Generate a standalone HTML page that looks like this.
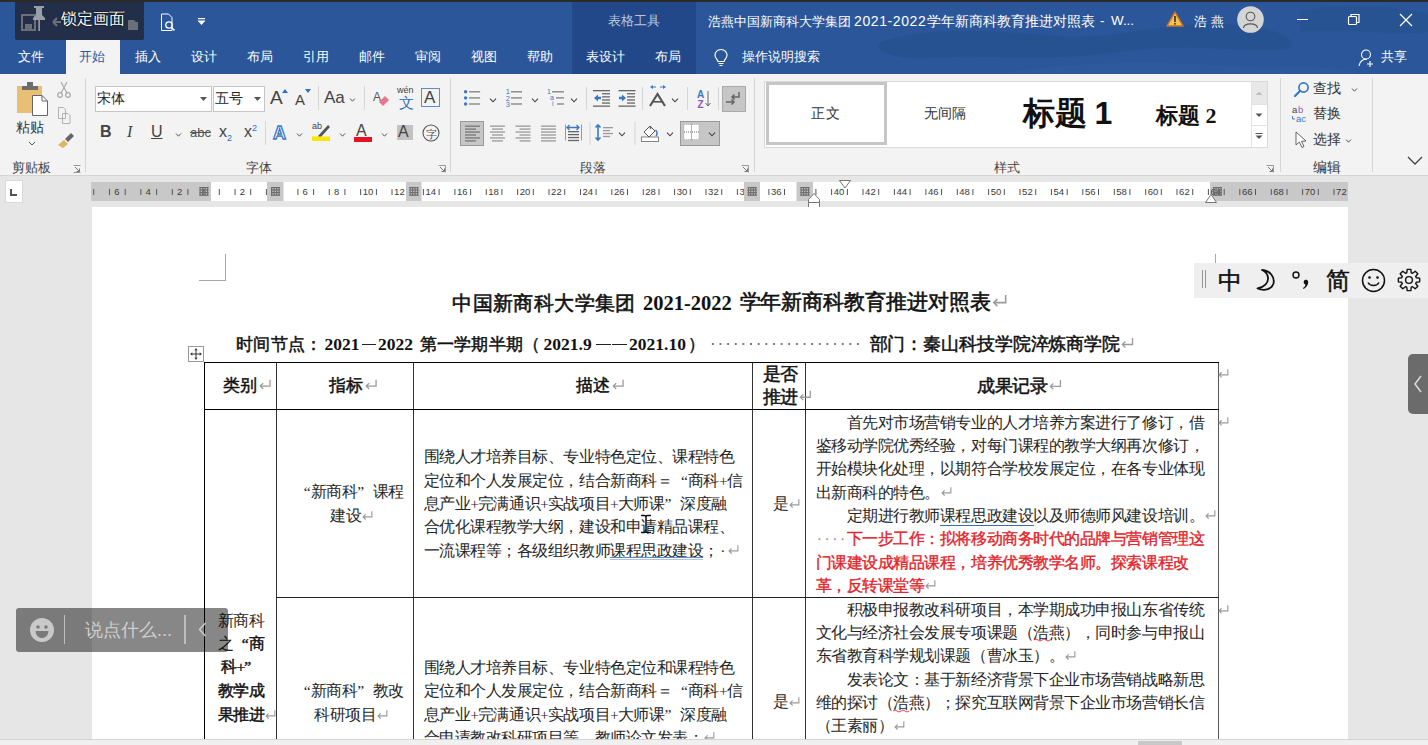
<!DOCTYPE html>
<html><head><meta charset="utf-8">
<style>
*{margin:0;padding:0;box-sizing:border-box}
html,body{width:1428px;height:745px;overflow:hidden;background:#e6e6e6;font-family:"Liberation Sans",sans-serif;position:relative}
.a{position:absolute}
.nw{white-space:nowrap}
#top{left:0;top:0;width:1428px;height:2px;background:#2b2b2b}
#title{left:0;top:2px;width:1428px;height:72px;background:#2b579a;overflow:hidden}
#ribbon{left:0;top:74px;width:1428px;height:102px;background:#f3f3f3;border-bottom:1px solid #d5d5d5}
#ruler{left:91px;top:181px;width:1257px;height:20px;background:#fff}
#page{left:91px;top:207px;width:1257px;height:532px;background:#fff}
#status{left:0;top:738px;width:1428px;height:7px;background:#f0f0f0;border-top:1px solid #d0d0d0}
.tab{top:38px;height:36px;line-height:36px;color:#fff;font-size:15px;text-align:center}
.doc{font-family:"Liberation Serif",serif;color:#1a1a1a}
.ln{position:absolute;background:#000}
.L{position:absolute;white-space:nowrap;font-family:"Liberation Serif",serif;line-height:1.5}
.L i{display:inline-block;width:1em;text-align:center;font-style:normal}
.L i.r{text-align:right}.L i.l{text-align:left}
</style></head>
<body>
<div id="top" class="a"></div>
<div id="title" class="a">
 <svg class="a" style="left:0;top:0" width="1428" height="72">
  <path d="M880 40 C930 22 1010 30 1060 34 C1120 38 1160 20 1230 22 C1270 24 1300 36 1290 46 C1250 52 1180 40 1120 50 C1060 60 990 52 930 56 C900 58 870 50 880 40 Z" fill="#244b86" opacity="0.4"/>
  <path d="M1300 10 C1340 0 1400 5 1428 12 V30 C1390 34 1340 26 1300 30 Z" fill="#26508c" opacity="0.5"/>
  <path d="M1000 72 C1060 60 1150 58 1230 64 C1280 68 1320 60 1360 72 Z" fill="#2f5da0" opacity="0.5"/>
 </svg>
 <div class="a" style="left:572px;top:0;width:124px;height:72px;background:#22488a"></div>
 <div class="a nw" style="left:572px;top:10px;width:124px;text-align:center;font-size:13.4px;color:#b9c6dc">表格工具</div>
 <div class="a nw" style="left:708px;top:11px;font-size:13.3px;color:#fff">浩燕中国新商科大学集团</div>
 <div class="a nw" style="left:854px;top:11px;font-size:14px;color:#fff;letter-spacing:0.6px">2021-2022</div>
 <div class="a nw" style="left:927px;top:11px;font-size:13.5px;color:#fff">学年新商科教育推进对照表</div>
 <div class="a nw" style="left:1100px;top:11px;font-size:13.4px;color:#fff">-</div>
 <div class="a nw" style="left:1111px;top:11px;font-size:13.4px;color:#fff">W...</div>
 <svg class="a" style="left:1166px;top:8px" width="18" height="18"><path d="M9 2 L17 16 L1 16 Z" fill="#f4c24a" stroke="#c6722a" stroke-width="1.5" stroke-linejoin="round"/><rect x="8.2" y="6" width="1.6" height="6" fill="#333"/><rect x="8.2" y="13" width="1.6" height="1.6" fill="#333"/></svg>
 <div class="a nw" style="left:1194px;top:11px;font-size:13.4px;color:#fff">浩</div><div class="a nw" style="left:1211px;top:11px;font-size:13.4px;color:#fff">燕</div>
 <svg class="a" style="left:1237px;top:4px" width="27" height="27"><circle cx="13.5" cy="13.5" r="13.3" fill="#d4d4d4"/><circle cx="13.5" cy="10.5" r="4.3" fill="none" stroke="#555" stroke-width="1.1"/><path d="M6.5 22 C7 16.5 20 16.5 20.5 22" fill="none" stroke="#555" stroke-width="1.1"/></svg>
 <div class="a" style="left:1297px;top:17px;width:11px;height:1px;background:#fff"></div>
 <svg class="a" style="left:1347px;top:11px" width="14" height="14"><rect x="1.5" y="3.5" width="8" height="8" fill="none" stroke="#fff" stroke-width="1.2" rx="1"/><path d="M4 3.5 V1.5 H12 V9.5 H9.5" fill="none" stroke="#fff" stroke-width="1.2"/></svg>
 <svg class="a" style="left:1399px;top:11px" width="14" height="14"><path d="M1 1 L13 13 M13 1 L1 13" stroke="#fff" stroke-width="1.3"/></svg>
 <!-- tabs -->
 <div class="a" style="left:66px;top:38px;width:54px;height:34px;background:#f3f3f3"></div>
 <div class="a nw" style="left:18px;top:46px;font-size:13.4px;color:#fff">文件</div>
 <div class="a nw" style="left:79px;top:46px;font-size:13.4px;color:#2b579a">开始</div>
 <div class="a nw" style="left:135px;top:46px;font-size:13.4px;color:#fff">插入</div>
 <div class="a nw" style="left:191px;top:46px;font-size:13.4px;color:#fff">设计</div>
 <div class="a nw" style="left:247px;top:46px;font-size:13.4px;color:#fff">布局</div>
 <div class="a nw" style="left:303px;top:46px;font-size:13.4px;color:#fff">引用</div>
 <div class="a nw" style="left:359px;top:46px;font-size:13.4px;color:#fff">邮件</div>
 <div class="a nw" style="left:415px;top:46px;font-size:13.4px;color:#fff">审阅</div>
 <div class="a nw" style="left:471px;top:46px;font-size:13.4px;color:#fff">视图</div>
 <div class="a nw" style="left:527px;top:46px;font-size:13.4px;color:#fff">帮助</div>
 <div class="a nw" style="left:586px;top:46px;font-size:13.4px;color:#fff">表设计</div>
 <div class="a nw" style="left:655px;top:46px;font-size:13.4px;color:#fff">布局</div>
 <svg class="a" style="left:713px;top:46px" width="16" height="20"><path d="M8 1.5 C4 1.5 2 4.5 2 7.2 C2 10 4.5 11.5 5 13.5 L11 13.5 C11.5 11.5 14 10 14 7.2 C14 4.5 12 1.5 8 1.5 Z" fill="none" stroke="#fff" stroke-width="1.2"/><path d="M5.5 15.5 H10.5 M6.5 17.5 H9.5" stroke="#fff" stroke-width="1.2"/></svg>
 <div class="a nw" style="left:742px;top:46px;font-size:13.4px;color:#fff">操作说明搜索</div>
 <svg class="a" style="left:1358px;top:46px" width="18" height="20"><circle cx="8" cy="6.5" r="4.5" fill="none" stroke="#fff" stroke-width="1.1"/><path d="M1 18 C1.5 12.5 6 11 9 11.3" fill="none" stroke="#fff" stroke-width="1.1"/><path d="M12 13 V19 M9 16 H15" stroke="#fff" stroke-width="1.1"/></svg>
 <div class="a nw" style="left:1381px;top:46px;font-size:13.4px;color:#fff">共享</div>
 <!-- lock overlay -->
 <div class="a" style="left:15px;top:-2px;width:129px;height:40px;background:#232f48;border-radius:0 0 2px 2px"></div>
 <svg class="a" style="left:20px;top:8px" width="120" height="26">
  <rect x="2" y="5" width="13" height="15" fill="none" stroke="#6b6f78" stroke-width="2"/>
  <rect x="5" y="14" width="7" height="6" fill="#6b6f78"/>
  <path d="M33 12 H41 M33 12 L37 8 M33 12 L37 16" stroke="#6b6f78" stroke-width="2" fill="none"/>
  <path d="M108 10 H114 L116 12 H118 V20 H108 Z" fill="#6b6f78"/>
 </svg>
 <svg class="a" style="left:30px;top:2px" width="18" height="28"><path d="M4 2 H14 V4 H12 V11 L15 14 V16 H3 V14 L6 11 V4 H4 Z" fill="#9a9ea6"/><rect x="8.3" y="16" width="1.6" height="11" fill="#9a9ea6"/></svg>
 <div class="a nw" style="left:61px;top:7px;font-size:16px;color:#fff;text-shadow:0 0 1.5px #000,0 0 1px #000">锁定画面</div>
 <svg class="a" style="left:160px;top:11px" width="20" height="20"><path d="M1.5 1 H8.5 L12 4.5 V17.5 H1.5 Z" fill="none" stroke="#fff" stroke-width="1"/><circle cx="9" cy="12" r="3.2" fill="none" stroke="#fff" stroke-width="1.3"/><path d="M11.3 14.3 L14.5 17.5" stroke="#fff" stroke-width="1.5"/></svg>
 <svg class="a" style="left:197px;top:16px" width="9" height="8"><rect x="1" y="0" width="7" height="1.2" fill="#fff"/><path d="M0.5 2.5 H8.5 L4.5 7 Z" fill="#fff"/></svg>
</div>
<div id="ribbon" class="a">
 <!-- separators -->
 <div class="a" style="left:85px;top:4px;width:1px;height:94px;background:#d6d6d6"></div>
 <div class="a" style="left:450px;top:4px;width:1px;height:94px;background:#d6d6d6"></div>
 <div class="a" style="left:754px;top:4px;width:1px;height:94px;background:#d6d6d6"></div>
 <div class="a" style="left:1280px;top:4px;width:1px;height:94px;background:#d6d6d6"></div>
 <div class="a" style="left:1372px;top:4px;width:1px;height:94px;background:#d6d6d6"></div>
 <!-- clipboard -->
 <svg class="a" style="left:14px;top:6px" width="64" height="72">
  <rect x="3" y="6" width="25" height="27" fill="#e8bf73"/>
  <path d="M8 6 H24 V10 H8 Z" fill="#6d6d6d"/><rect x="13" y="2" width="6" height="5" fill="#6d6d6d"/>
  <path d="M18.5 15.5 H28 L33.5 21 V35.5 H18.5 Z" fill="#fff" stroke="#666" stroke-width="1"/>
  <path d="M28 15.5 V21 H33.5" fill="none" stroke="#666" stroke-width="1"/>
  <circle cx="46" cy="15" r="2.3" fill="none" stroke="#aaa" stroke-width="1.2"/><circle cx="54" cy="15" r="2.3" fill="none" stroke="#aaa" stroke-width="1.2"/>
  <path d="M47 13 L53 2 M53 13 L47 2" stroke="#aaa" stroke-width="1.2"/>
  <path d="M44.5 27.5 H49.5 L51.5 29.5 V38.5 H44.5 Z M48.5 33.5 H54 L56 35.5 V43.5 H48.5 Z" fill="#f3f3f3" stroke="#aaa" stroke-width="0.9"/>
  <path d="M44 65 L50 60 L54 64 L49 68 Z" fill="#e0b468"/><path d="M51 59 L57 53 L60 56 L54 62 Z" fill="#666"/>
 </svg>
 <div class="a nw" style="left:16px;top:45px;font-size:14px;color:#333">粘贴</div>
 <svg class="a" style="left:28px;top:67px" width="8" height="5"><path d="M1 1 L4 4 L7 1" fill="none" stroke="#555" stroke-width="1"/></svg>
 <div class="a nw" style="left:12px;top:85px;font-size:13px;color:#444">剪贴板</div>
 <svg class="a" style="left:73px;top:91px" width="8" height="8"><path d="M0.5 0.5 H7.5 V7.5 H0.5 Z" fill="none" stroke="#999" stroke-width="1" stroke-dasharray="7 7"/><path d="M2 2 L6.5 6.5 M6.5 3.5 V6.5 H3.5" fill="none" stroke="#777" stroke-width="1"/></svg>
 <!-- font group -->
 <div class="a" style="left:95px;top:12px;width:117px;height:26px;background:#fff;border:1px solid #c6c6c6"></div>
 <div class="a nw" style="left:97px;top:16px;font-size:14px;color:#222">宋体</div>
 <svg class="a" style="left:200px;top:23px" width="7" height="4"><path d="M0 0 H7 L3.5 4Z" fill="#555"/></svg>
 <div class="a" style="left:213px;top:12px;width:52px;height:26px;background:#fff;border:1px solid #c6c6c6"></div>
 <div class="a nw" style="left:215px;top:16px;font-size:14px;color:#222">五号</div>
 <svg class="a" style="left:254px;top:23px" width="7" height="4"><path d="M0 0 H7 L3.5 4Z" fill="#555"/></svg>
 <div class="a nw" style="left:270px;top:13px;font-size:19px;color:#444">A</div>
 <svg class="a" style="left:282px;top:15px" width="6" height="4"><path d="M0 4 L3 0 L6 4Z" fill="#2f6fbf"/></svg>
 <div class="a nw" style="left:295px;top:17px;font-size:15px;color:#444">A</div>
 <svg class="a" style="left:305px;top:15px" width="6" height="4"><path d="M0 0 L3 4 L6 0Z" fill="#2f6fbf"/></svg>
 <div class="a" style="left:318px;top:12px;width:1px;height:24px;background:#d6d6d6"></div>
 <div class="a nw" style="left:324px;top:14px;font-size:17px;color:#444">Aa</div>
 <svg class="a" style="left:349px;top:24px" width="7" height="4"><path d="M1 0.5 L3.5 3.2 L6 0.5" fill="none" stroke="#555"/></svg>
 <div class="a" style="left:364px;top:12px;width:1px;height:24px;background:#d6d6d6"></div>
 <svg class="a" style="left:372px;top:14px" width="20" height="20"><text x="1" y="13" font-size="12" fill="#555" font-family="Liberation Sans">A</text><path d="M7 14 L13 8 L17 12 L11 18 Z" fill="#e8778a"/></svg>
 <svg class="a" style="left:396px;top:10px" width="20" height="26"><text x="1" y="9" font-size="9" fill="#444" font-family="Liberation Sans">wén</text><text x="3" y="24" font-size="15" fill="#2f6fbf">文</text></svg>
 <div class="a" style="left:421px;top:14px;width:19px;height:19px;border:1px solid #5b8fd0"></div>
 <div class="a nw" style="left:424px;top:14px;font-size:17px;color:#444">A</div>
 <!-- font row 2 -->
 <div class="a nw" style="left:100px;top:49px;font-size:16px;font-weight:bold;color:#444">B</div>
 <div class="a nw" style="left:127px;top:49px;font-size:16px;font-style:italic;color:#444;font-family:'Liberation Serif'">I</div>
 <div class="a nw" style="left:151px;top:49px;font-size:16px;color:#444;text-decoration:underline">U</div>
 <svg class="a" style="left:175px;top:59px" width="7" height="4"><path d="M1 0.5 L3.5 3.2 L6 0.5" fill="none" stroke="#555"/></svg>
 <div class="a nw" style="left:190px;top:51px;font-size:13px;color:#555;text-decoration:line-through">abc</div>
 <div class="a nw" style="left:219px;top:49px;font-size:16px;color:#444">x<sub style="font-size:9px;color:#2f6fbf">2</sub></div>
 <div class="a nw" style="left:244px;top:49px;font-size:16px;color:#444">x<sup style="font-size:9px;color:#2f6fbf">2</sup></div>
 <div class="a" style="left:265px;top:47px;width:1px;height:24px;background:#d6d6d6"></div>
 <svg class="a" style="left:272px;top:48px" width="18" height="22"><text x="1" y="17" font-size="18" fill="#fff" stroke="#3a78c0" stroke-width="1.3" font-family="Liberation Sans" font-weight="bold">A</text></svg>
 <svg class="a" style="left:296px;top:59px" width="7" height="4"><path d="M1 0.5 L3.5 3.2 L6 0.5" fill="none" stroke="#555"/></svg>
 <svg class="a" style="left:311px;top:45px" width="22" height="26"><text x="1" y="10" font-size="9" fill="#444" font-family="Liberation Sans">ab</text><path d="M7 17 L17 6 L19 8 L9 19 Z" fill="#555"/><rect x="1" y="17.5" width="18" height="4.5" fill="#f8e800"/></svg>
 <svg class="a" style="left:339px;top:59px" width="7" height="4"><path d="M1 0.5 L3.5 3.2 L6 0.5" fill="none" stroke="#555"/></svg>
 <div class="a nw" style="left:356px;top:48px;font-size:16px;color:#444">A</div>
 <div class="a" style="left:354px;top:63px;width:18px;height:4.5px;background:#e81123"></div>
 <svg class="a" style="left:381px;top:59px" width="7" height="4"><path d="M1 0.5 L3.5 3.2 L6 0.5" fill="none" stroke="#555"/></svg>
 <div class="a" style="left:397px;top:51px;width:15.5px;height:15px;background:#c2c2c2"></div>
 <div class="a nw" style="left:398px;top:49px;font-size:16px;color:#444">A</div>
 <svg class="a" style="left:421px;top:49px" width="20" height="20"><circle cx="10" cy="10" r="8" fill="none" stroke="#555" stroke-width="1.1"/><text x="4.5" y="14.5" font-size="11" fill="#555">字</text></svg>
<svg class="a" style="left:450px;top:0" width="305" height="100"><circle cx="15.600000000000023" cy="17.799999999999997" r="1.7" fill="#3a78c0"/><rect x="19.100000000000023" y="17.099999999999998" width="11" height="1.4" fill="#888"/><circle cx="15.600000000000023" cy="23.900000000000006" r="1.7" fill="#3a78c0"/><rect x="19.100000000000023" y="23.200000000000006" width="11" height="1.4" fill="#888"/><circle cx="15.600000000000023" cy="30" r="1.7" fill="#3a78c0"/><rect x="19.100000000000023" y="29.3" width="11" height="1.4" fill="#888"/><text x="55.80000000000001" y="20.4" font-size="7.5" fill="#3a78c0" font-family="Liberation Sans">1</text><rect x="61" y="17.099999999999998" width="11" height="1.4" fill="#888"/><text x="55.80000000000001" y="26.500000000000007" font-size="7.5" fill="#3a78c0" font-family="Liberation Sans">2</text><rect x="61" y="23.200000000000006" width="11" height="1.4" fill="#888"/><text x="55.80000000000001" y="32.6" font-size="7.5" fill="#3a78c0" font-family="Liberation Sans">3</text><rect x="61" y="29.3" width="11" height="1.4" fill="#888"/><text x="97" y="20" font-size="7" fill="#3a78c0" font-family="Liberation Sans">1</text><text x="100" y="26" font-size="7" fill="#3a78c0" font-family="Liberation Sans">a</text><text x="102" y="32" font-size="7" fill="#3a78c0" font-family="Liberation Sans">i</text><rect x="102" y="17.099999999999994" width="12" height="1.4" fill="#888"/><rect x="106" y="23.200000000000003" width="8" height="1.4" fill="#888"/><rect x="107" y="29.299999999999997" width="7" height="1.4" fill="#888"/><rect x="136" y="13" width="1" height="23" fill="#d6d6d6"/><rect x="143" y="16.0" width="17" height="1.3" fill="#666"/><rect x="168.5" y="16.0" width="17" height="1.3" fill="#666"/><rect x="152" y="19.099999999999994" width="8" height="1.3" fill="#666"/><rect x="177" y="19.099999999999994" width="8" height="1.3" fill="#666"/><rect x="152" y="22.200000000000003" width="8" height="1.3" fill="#666"/><rect x="177" y="22.200000000000003" width="8" height="1.3" fill="#666"/><rect x="152" y="25.299999999999997" width="8" height="1.3" fill="#666"/><rect x="177" y="25.299999999999997" width="8" height="1.3" fill="#666"/><rect x="152" y="28.400000000000006" width="8" height="1.3" fill="#666"/><rect x="177" y="28.400000000000006" width="8" height="1.3" fill="#666"/><rect x="143" y="31.5" width="17" height="1.3" fill="#666"/><rect x="168.5" y="31.5" width="17" height="1.3" fill="#666"/><path d="M144 24 L148 20.5 V22.799999999999997 H151 V25.200000000000003 H148 V27.5 Z" fill="#3a78c0"/><path d="M176 24 L172 20.5 V22.799999999999997 H169 V25.200000000000003 H172 V27.5 Z" fill="#3a78c0"/><rect x="192" y="13" width="1" height="23" fill="#d6d6d6"/><path d="M200 32 L207.5 20 L215 32" fill="none" stroke="#555" stroke-width="2.2"/><rect x="203" y="27" width="9" height="1.6" fill="#555"/><path d="M200 13 L203 11 V15 Z M216 13 L213 11 V15 Z" fill="#3a78c0"/><rect x="202" y="12.5" width="4" height="1" fill="#3a78c0"/><rect x="210" y="12.5" width="4" height="1" fill="#3a78c0"/><rect x="237" y="13" width="1" height="23" fill="#d6d6d6"/><text x="247" y="24" font-size="10" font-weight="bold" fill="#3a78c0" font-family="Liberation Sans">A</text><text x="247.5" y="33.5" font-size="10" font-weight="bold" fill="#9a55c0" font-family="Liberation Sans">Z</text><path d="M258 17 V32 M255.5 29 L258 32 L260.5 29" fill="none" stroke="#666" stroke-width="1"/><rect x="268" y="13" width="1" height="23" fill="#d6d6d6"/><rect x="272.5" y="12.5" width="23" height="25" fill="#c6c6c6" stroke="#aaa" stroke-width="1"/><path d="M289 18 V23 H282 M284.5 20.5 L282 23 L284.5 25.5" fill="none" stroke="#666" stroke-width="1.5"/><path d="M276 28 H284 M281.5 25.5 L284 28 L281.5 30.5" fill="none" stroke="#666" stroke-width="1.5"/><rect x="10.5" y="47.5" width="23" height="24" fill="#c6c6c6" stroke="#999" stroke-width="1"/><rect x="15" y="51.5" width="15" height="1.3" fill="#777"/><rect x="40.0" y="51.5" width="15" height="1.3" fill="#999"/><rect x="65.5" y="51.5" width="15" height="1.3" fill="#999"/><rect x="91" y="51.5" width="15" height="1.3" fill="#999"/><rect x="15" y="54.44999999999999" width="11" height="1.3" fill="#777"/><rect x="42.0" y="54.44999999999999" width="11" height="1.3" fill="#999"/><rect x="69.5" y="54.44999999999999" width="11" height="1.3" fill="#999"/><rect x="91" y="54.44999999999999" width="15" height="1.3" fill="#999"/><rect x="15" y="57.400000000000006" width="15" height="1.3" fill="#777"/><rect x="40.0" y="57.400000000000006" width="15" height="1.3" fill="#999"/><rect x="65.5" y="57.400000000000006" width="15" height="1.3" fill="#999"/><rect x="91" y="57.400000000000006" width="15" height="1.3" fill="#999"/><rect x="15" y="60.349999999999994" width="11" height="1.3" fill="#777"/><rect x="42.0" y="60.349999999999994" width="11" height="1.3" fill="#999"/><rect x="69.5" y="60.349999999999994" width="11" height="1.3" fill="#999"/><rect x="91" y="60.349999999999994" width="15" height="1.3" fill="#999"/><rect x="15" y="63.30000000000001" width="15" height="1.3" fill="#777"/><rect x="40.0" y="63.30000000000001" width="15" height="1.3" fill="#999"/><rect x="65.5" y="63.30000000000001" width="15" height="1.3" fill="#999"/><rect x="91" y="63.30000000000001" width="15" height="1.3" fill="#999"/><rect x="15" y="66.25" width="11" height="1.3" fill="#777"/><rect x="42.0" y="66.25" width="11" height="1.3" fill="#999"/><rect x="69.5" y="66.25" width="11" height="1.3" fill="#999"/><rect x="91" y="66.25" width="15" height="1.3" fill="#999"/><rect x="118" y="57.0" width="11" height="1.3" fill="#666"/><rect x="118" y="59.94999999999999" width="11" height="1.3" fill="#666"/><rect x="118" y="62.900000000000006" width="11" height="1.3" fill="#666"/><rect x="118" y="65.85" width="11" height="1.3" fill="#666"/><rect x="115" y="50.5" width="1" height="16" fill="#6a9fd8"/><rect x="131" y="50.5" width="1" height="16" fill="#6a9fd8"/><path d="M117 53.5 H129 M119.5 51 L117 53.5 L119.5 56 M126.5 51 L129 53.5 L126.5 56" fill="none" stroke="#3a78c0" stroke-width="1.3"/><rect x="139.5" y="48" width="1" height="23" fill="#d6d6d6"/><path d="M148 51 V66 M145.5 53.5 L148 51 L150.5 53.5 M145.5 63.5 L148 66 L150.5 63.5" fill="none" stroke="#3a78c0" stroke-width="1.6"/><rect x="153" y="53.0" width="10" height="1.3" fill="#999"/><rect x="153" y="55.94999999999999" width="7" height="1.3" fill="#999"/><rect x="153" y="58.900000000000006" width="10" height="1.3" fill="#999"/><rect x="153" y="61.849999999999994" width="7" height="1.3" fill="#999"/><rect x="184.5" y="48" width="1" height="23" fill="#d6d6d6"/><rect x="191.5" y="63" width="17" height="4.5" fill="#fff" stroke="#777" stroke-width="0.9"/><path d="M194 58 L200 52 L205 57 L199 63 Z" fill="#fff" stroke="#555" stroke-width="1"/><path d="M205.5 56 C208 58 207 61 206 62" fill="none" stroke="#3a78c0" stroke-width="1.5"/><circle cx="200.5" cy="54" r="0.9" fill="#555"/><rect x="230.5" y="47.5" width="39" height="24" fill="#c6c6c6" stroke="#999" stroke-width="1"/><rect x="234" y="50.5" width="15" height="15" fill="#fff"/><path d="M234 58 H249 M241.5 50.5 V65.5" stroke="#444" stroke-width="0.8" stroke-dasharray="1 1"/><path d="M234 50.5 H249 V65.5 H234 Z" fill="none" stroke="#999" stroke-width="0.6" stroke-dasharray="1 1"/></svg><svg class="a" style="left:489px;top:24px" width="8" height="5"><path d="M1 0.7 L4 3.8 L7 0.7" fill="none" stroke="#444" stroke-width="1.1"/></svg><svg class="a" style="left:531px;top:24px" width="8" height="5"><path d="M1 0.7 L4 3.8 L7 0.7" fill="none" stroke="#444" stroke-width="1.1"/></svg><svg class="a" style="left:570px;top:24px" width="8" height="5"><path d="M1 0.7 L4 3.8 L7 0.7" fill="none" stroke="#444" stroke-width="1.1"/></svg><svg class="a" style="left:671px;top:24px" width="8" height="5"><path d="M1 0.7 L4 3.8 L7 0.7" fill="none" stroke="#444" stroke-width="1.1"/></svg><svg class="a" style="left:618px;top:58px" width="8" height="5"><path d="M1 0.7 L4 3.8 L7 0.7" fill="none" stroke="#444" stroke-width="1.1"/></svg><svg class="a" style="left:666px;top:58px" width="8" height="5"><path d="M1 0.7 L4 3.8 L7 0.7" fill="none" stroke="#444" stroke-width="1.1"/></svg><svg class="a" style="left:708px;top:58px" width="8" height="5"><path d="M1 0.7 L4 3.8 L7 0.7" fill="none" stroke="#444" stroke-width="1.1"/></svg><div class="a nw" style="left:580px;top:85px;font-size:13px;color:#444">段落</div><svg class="a" style="left:741px;top:91px" width="8" height="8"><path d="M0.5 0.5 H7.5 V7.5" fill="none" stroke="#999"/><path d="M2 2 L6.5 6.5 M6.5 3.5 V6.5 H3.5" fill="none" stroke="#777" stroke-width="1"/></svg>

 <div class="a" style="left:764px;top:7px;width:504px;height:67px;background:#fff;border:1px solid #d9d9d9"></div>
 <div class="a" style="left:766px;top:8px;width:121px;height:63px;border:3px solid #c6c6c6;background:#fff"></div>
 <div class="a nw" style="left:811px;top:31px;font-size:14px;color:#333;letter-spacing:1px">正文</div>
 <div class="a nw" style="left:924px;top:31px;font-size:14px;color:#333">无间隔</div>
 <div class="a nw" style="left:1023px;top:18px;font-size:32px;font-weight:bold;color:#111;letter-spacing:-0.5px">标题 1</div>
 <div class="a nw" style="left:1156px;top:27px;font-size:22px;font-weight:bold;color:#111;font-family:'Liberation Serif',serif">标题 2</div>
 <div class="a" style="left:1251px;top:7px;width:17px;height:67px;border-left:1px solid #e3e3e3"></div>
 <div class="a" style="left:1252px;top:8px;width:15px;height:22px;background:#e8e8e8"></div>
 <div class="a" style="left:1252px;top:51px;width:15px;height:1px;background:#e3e3e3"></div>
 <div class="a" style="left:1252px;top:30px;width:15px;height:1px;background:#e3e3e3"></div>
 <svg class="a" style="left:1255px;top:17px" width="8" height="5"><path d="M0.5 4 H7.5 L4 0.5Z" fill="#c0c0c0"/></svg>
 <svg class="a" style="left:1255px;top:39px" width="8" height="5"><path d="M0.5 0.5 H7.5 L4 4Z" fill="#555"/></svg>
 <svg class="a" style="left:1255px;top:59px" width="8" height="7"><rect x="0.5" y="0" width="7" height="1" fill="#555"/><path d="M0.5 2.5 H7.5 L4 6Z" fill="#555"/></svg>
 <div class="a nw" style="left:994px;top:85px;font-size:13px;color:#444">样式</div>
 <svg class="a" style="left:1266px;top:91px" width="8" height="8"><path d="M0.5 0.5 H7.5 V7.5" fill="none" stroke="#999"/><path d="M2 2 L6.5 6.5 M6.5 3.5 V6.5 H3.5" fill="none" stroke="#777" stroke-width="1"/></svg>
 <svg class="a" style="left:1293px;top:7px" width="18" height="18"><circle cx="10.5" cy="6.5" r="4.6" fill="none" stroke="#3a78c0" stroke-width="1.7"/><path d="M7.2 9.8 L2 15" stroke="#3a78c0" stroke-width="2.2" stroke-linecap="round"/></svg>
 <div class="a nw" style="left:1313px;top:6px;font-size:14px;color:#333">查找</div>
 <svg class="a" style="left:1351px;top:14px" width="7" height="4"><path d="M1 0.5 L3.5 3.2 L6 0.5" fill="none" stroke="#555"/></svg>
 <svg class="a" style="left:1292px;top:31px" width="20" height="18"><text x="0" y="8" font-size="9.5" fill="#444" font-family="Liberation Sans">a</text><text x="6" y="8" font-size="9.5" fill="#9a55c0" font-family="Liberation Sans">b</text><text x="4" y="16.5" font-size="9.5" fill="#3a78c0" font-family="Liberation Sans">ac</text><path d="M0.5 11 V14 H3" fill="none" stroke="#3a78c0" stroke-width="0.9"/></svg>
 <div class="a nw" style="left:1313px;top:31px;font-size:14px;color:#333">替换</div>
 <svg class="a" style="left:1295px;top:57px" width="14" height="18"><path d="M1 1 L1 14 L4.3 11 L7 16.5 L9 15.5 L6.5 10.3 L11 10 Z" fill="#fff" stroke="#555" stroke-width="0.9" stroke-linejoin="round"/></svg>
 <div class="a nw" style="left:1313px;top:57px;font-size:14px;color:#333">选择</div>
 <svg class="a" style="left:1345px;top:65px" width="7" height="4"><path d="M1 0.5 L3.5 3.2 L6 0.5" fill="none" stroke="#555"/></svg>
 <div class="a nw" style="left:1313px;top:85px;font-size:14px;color:#333">编辑</div>
 <svg class="a" style="left:1407px;top:82px" width="16" height="10"><path d="M1 1 L8 8 L15 1" fill="none" stroke="#444" stroke-width="1.3"/></svg>
 <div class="a nw" style="left:246px;top:85px;font-size:13px;color:#444">字体</div>
 <svg class="a" style="left:438px;top:91px" width="8" height="8"><path d="M0.5 0.5 H7.5 V7.5" fill="none" stroke="#999"/><path d="M2 2 L6.5 6.5 M6.5 3.5 V6.5 H3.5" fill="none" stroke="#777" stroke-width="1"/></svg>
</div>

<div class="a" style="left:91px;top:182px;width:1257px;height:19px;background:#fff;overflow:hidden"><div class="a" style="left:0;top:0;width:120px;height:19px;background:#c8c8c8"></div><div class="a" style="left:1119px;top:0;width:138px;height:19px;background:#c8c8c8"></div><svg class="a" style="left:0;top:0" width="1257" height="19"><rect x="2.2" y="7" width="1" height="6" fill="#555"/><text x="-5.6" y="13" font-size="9.5" fill="#3a3a3a" text-anchor="middle" font-family="Liberation Sans">8</text><rect x="18.0" y="7" width="1" height="6" fill="#555"/><rect x="33.7" y="7" width="1" height="6" fill="#555"/><text x="25.8" y="13" font-size="9.5" fill="#3a3a3a" text-anchor="middle" font-family="Liberation Sans">6</text><rect x="49.4" y="7" width="1" height="6" fill="#555"/><rect x="65.1" y="7" width="1" height="6" fill="#555"/><text x="57.2" y="13" font-size="9.5" fill="#3a3a3a" text-anchor="middle" font-family="Liberation Sans">4</text><rect x="80.8" y="7" width="1" height="6" fill="#555"/><rect x="96.4" y="7" width="1" height="6" fill="#555"/><text x="88.6" y="13" font-size="9.5" fill="#3a3a3a" text-anchor="middle" font-family="Liberation Sans">2</text><rect x="112.2" y="7" width="1" height="6" fill="#555"/><rect x="127.8" y="7" width="1" height="6" fill="#555"/><rect x="143.6" y="7" width="1" height="6" fill="#555"/><rect x="159.2" y="7" width="1" height="6" fill="#555"/><text x="151.4" y="13" font-size="9.5" fill="#3a3a3a" text-anchor="middle" font-family="Liberation Sans">2</text><rect x="174.9" y="7" width="1" height="6" fill="#555"/><rect x="190.6" y="7" width="1" height="6" fill="#555"/><text x="182.8" y="13" font-size="9.5" fill="#3a3a3a" text-anchor="middle" font-family="Liberation Sans">4</text><rect x="206.4" y="7" width="1" height="6" fill="#555"/><rect x="222.1" y="7" width="1" height="6" fill="#555"/><text x="214.2" y="13" font-size="9.5" fill="#3a3a3a" text-anchor="middle" font-family="Liberation Sans">6</text><rect x="237.8" y="7" width="1" height="6" fill="#555"/><rect x="253.4" y="7" width="1" height="6" fill="#555"/><text x="245.6" y="13" font-size="9.5" fill="#3a3a3a" text-anchor="middle" font-family="Liberation Sans">8</text><rect x="269.1" y="7" width="1" height="6" fill="#555"/><rect x="284.9" y="7" width="1" height="6" fill="#555"/><text x="277.0" y="13" font-size="9.5" fill="#3a3a3a" text-anchor="middle" font-family="Liberation Sans">10</text><rect x="300.5" y="7" width="1" height="6" fill="#555"/><rect x="316.2" y="7" width="1" height="6" fill="#555"/><text x="308.4" y="13" font-size="9.5" fill="#3a3a3a" text-anchor="middle" font-family="Liberation Sans">12</text><rect x="331.9" y="7" width="1" height="6" fill="#555"/><rect x="347.6" y="7" width="1" height="6" fill="#555"/><text x="339.8" y="13" font-size="9.5" fill="#3a3a3a" text-anchor="middle" font-family="Liberation Sans">14</text><rect x="363.4" y="7" width="1" height="6" fill="#555"/><rect x="379.1" y="7" width="1" height="6" fill="#555"/><text x="371.2" y="13" font-size="9.5" fill="#3a3a3a" text-anchor="middle" font-family="Liberation Sans">16</text><rect x="394.8" y="7" width="1" height="6" fill="#555"/><rect x="410.4" y="7" width="1" height="6" fill="#555"/><text x="402.6" y="13" font-size="9.5" fill="#3a3a3a" text-anchor="middle" font-family="Liberation Sans">18</text><rect x="426.1" y="7" width="1" height="6" fill="#555"/><rect x="441.8" y="7" width="1" height="6" fill="#555"/><text x="434.0" y="13" font-size="9.5" fill="#3a3a3a" text-anchor="middle" font-family="Liberation Sans">20</text><rect x="457.5" y="7" width="1" height="6" fill="#555"/><rect x="473.2" y="7" width="1" height="6" fill="#555"/><text x="465.4" y="13" font-size="9.5" fill="#3a3a3a" text-anchor="middle" font-family="Liberation Sans">22</text><rect x="489.0" y="7" width="1" height="6" fill="#555"/><rect x="504.6" y="7" width="1" height="6" fill="#555"/><text x="496.8" y="13" font-size="9.5" fill="#3a3a3a" text-anchor="middle" font-family="Liberation Sans">24</text><rect x="520.3" y="7" width="1" height="6" fill="#555"/><rect x="536.0" y="7" width="1" height="6" fill="#555"/><text x="528.2" y="13" font-size="9.5" fill="#3a3a3a" text-anchor="middle" font-family="Liberation Sans">26</text><rect x="551.8" y="7" width="1" height="6" fill="#555"/><rect x="567.5" y="7" width="1" height="6" fill="#555"/><text x="559.6" y="13" font-size="9.5" fill="#3a3a3a" text-anchor="middle" font-family="Liberation Sans">28</text><rect x="583.1" y="7" width="1" height="6" fill="#555"/><rect x="598.8" y="7" width="1" height="6" fill="#555"/><text x="591.0" y="13" font-size="9.5" fill="#3a3a3a" text-anchor="middle" font-family="Liberation Sans">30</text><rect x="614.5" y="7" width="1" height="6" fill="#555"/><rect x="630.2" y="7" width="1" height="6" fill="#555"/><text x="622.4" y="13" font-size="9.5" fill="#3a3a3a" text-anchor="middle" font-family="Liberation Sans">32</text><rect x="645.9" y="7" width="1" height="6" fill="#555"/><rect x="661.6" y="7" width="1" height="6" fill="#555"/><text x="653.8" y="13" font-size="9.5" fill="#3a3a3a" text-anchor="middle" font-family="Liberation Sans">34</text><rect x="677.4" y="7" width="1" height="6" fill="#555"/><rect x="693.0" y="7" width="1" height="6" fill="#555"/><text x="685.2" y="13" font-size="9.5" fill="#3a3a3a" text-anchor="middle" font-family="Liberation Sans">36</text><rect x="708.8" y="7" width="1" height="6" fill="#555"/><rect x="724.4" y="7" width="1" height="6" fill="#555"/><text x="716.6" y="13" font-size="9.5" fill="#3a3a3a" text-anchor="middle" font-family="Liberation Sans">38</text><rect x="740.1" y="7" width="1" height="6" fill="#555"/><rect x="755.9" y="7" width="1" height="6" fill="#555"/><text x="748.0" y="13" font-size="9.5" fill="#3a3a3a" text-anchor="middle" font-family="Liberation Sans">40</text><rect x="771.5" y="7" width="1" height="6" fill="#555"/><rect x="787.2" y="7" width="1" height="6" fill="#555"/><text x="779.4" y="13" font-size="9.5" fill="#3a3a3a" text-anchor="middle" font-family="Liberation Sans">42</text><rect x="802.9" y="7" width="1" height="6" fill="#555"/><rect x="818.6" y="7" width="1" height="6" fill="#555"/><text x="810.8" y="13" font-size="9.5" fill="#3a3a3a" text-anchor="middle" font-family="Liberation Sans">44</text><rect x="834.4" y="7" width="1" height="6" fill="#555"/><rect x="850.0" y="7" width="1" height="6" fill="#555"/><text x="842.2" y="13" font-size="9.5" fill="#3a3a3a" text-anchor="middle" font-family="Liberation Sans">46</text><rect x="865.8" y="7" width="1" height="6" fill="#555"/><rect x="881.4" y="7" width="1" height="6" fill="#555"/><text x="873.6" y="13" font-size="9.5" fill="#3a3a3a" text-anchor="middle" font-family="Liberation Sans">48</text><rect x="897.1" y="7" width="1" height="6" fill="#555"/><rect x="912.8" y="7" width="1" height="6" fill="#555"/><text x="905.0" y="13" font-size="9.5" fill="#3a3a3a" text-anchor="middle" font-family="Liberation Sans">50</text><rect x="928.5" y="7" width="1" height="6" fill="#555"/><rect x="944.2" y="7" width="1" height="6" fill="#555"/><text x="936.4" y="13" font-size="9.5" fill="#3a3a3a" text-anchor="middle" font-family="Liberation Sans">52</text><rect x="959.9" y="7" width="1" height="6" fill="#555"/><rect x="975.7" y="7" width="1" height="6" fill="#555"/><text x="967.8" y="13" font-size="9.5" fill="#3a3a3a" text-anchor="middle" font-family="Liberation Sans">54</text><rect x="991.3" y="7" width="1" height="6" fill="#555"/><rect x="1007.0" y="7" width="1" height="6" fill="#555"/><text x="999.2" y="13" font-size="9.5" fill="#3a3a3a" text-anchor="middle" font-family="Liberation Sans">56</text><rect x="1022.8" y="7" width="1" height="6" fill="#555"/><rect x="1038.4" y="7" width="1" height="6" fill="#555"/><text x="1030.6" y="13" font-size="9.5" fill="#3a3a3a" text-anchor="middle" font-family="Liberation Sans">58</text><rect x="1054.2" y="7" width="1" height="6" fill="#555"/><rect x="1069.8" y="7" width="1" height="6" fill="#555"/><text x="1062.0" y="13" font-size="9.5" fill="#3a3a3a" text-anchor="middle" font-family="Liberation Sans">60</text><rect x="1085.5" y="7" width="1" height="6" fill="#555"/><rect x="1101.2" y="7" width="1" height="6" fill="#555"/><text x="1093.4" y="13" font-size="9.5" fill="#3a3a3a" text-anchor="middle" font-family="Liberation Sans">62</text><rect x="1116.9" y="7" width="1" height="6" fill="#555"/><rect x="1132.7" y="7" width="1" height="6" fill="#555"/><text x="1124.8" y="13" font-size="9.5" fill="#3a3a3a" text-anchor="middle" font-family="Liberation Sans">64</text><rect x="1148.3" y="7" width="1" height="6" fill="#555"/><rect x="1164.0" y="7" width="1" height="6" fill="#555"/><text x="1156.2" y="13" font-size="9.5" fill="#3a3a3a" text-anchor="middle" font-family="Liberation Sans">66</text><rect x="1179.8" y="7" width="1" height="6" fill="#555"/><rect x="1195.5" y="7" width="1" height="6" fill="#555"/><text x="1187.6" y="13" font-size="9.5" fill="#3a3a3a" text-anchor="middle" font-family="Liberation Sans">68</text><rect x="1211.1" y="7" width="1" height="6" fill="#555"/><rect x="1226.8" y="7" width="1" height="6" fill="#555"/><text x="1219.0" y="13" font-size="9.5" fill="#3a3a3a" text-anchor="middle" font-family="Liberation Sans">70</text><rect x="1242.5" y="7" width="1" height="6" fill="#555"/><rect x="1258.2" y="7" width="1" height="6" fill="#555"/><text x="1250.4" y="13" font-size="9.5" fill="#3a3a3a" text-anchor="middle" font-family="Liberation Sans">72</text><rect x="176" y="0" width="16.5" height="19" fill="#c8c8c8"/><rect x="180.0" y="5.0" width="9" height="1.2" fill="#6e6e6e"/><rect x="180.0" y="5" width="1.2" height="9" fill="#6e6e6e"/><rect x="180.0" y="7.5" width="9" height="1.2" fill="#6e6e6e"/><rect x="182.5" y="5" width="1.2" height="9" fill="#6e6e6e"/><rect x="180.0" y="10.0" width="9" height="1.2" fill="#6e6e6e"/><rect x="185.0" y="5" width="1.2" height="9" fill="#6e6e6e"/><rect x="180.0" y="12.5" width="9" height="1.2" fill="#6e6e6e"/><rect x="187.5" y="5" width="1.2" height="9" fill="#6e6e6e"/><rect x="315" y="0" width="15.5" height="19" fill="#c8c8c8"/><rect x="318.5" y="5.0" width="9" height="1.2" fill="#6e6e6e"/><rect x="318.5" y="5" width="1.2" height="9" fill="#6e6e6e"/><rect x="318.5" y="7.5" width="9" height="1.2" fill="#6e6e6e"/><rect x="321.0" y="5" width="1.2" height="9" fill="#6e6e6e"/><rect x="318.5" y="10.0" width="9" height="1.2" fill="#6e6e6e"/><rect x="323.5" y="5" width="1.2" height="9" fill="#6e6e6e"/><rect x="318.5" y="12.5" width="9" height="1.2" fill="#6e6e6e"/><rect x="326.0" y="5" width="1.2" height="9" fill="#6e6e6e"/><rect x="653" y="0" width="16" height="19" fill="#c8c8c8"/><rect x="656.75" y="5.0" width="9" height="1.2" fill="#6e6e6e"/><rect x="656.8" y="5" width="1.2" height="9" fill="#6e6e6e"/><rect x="656.75" y="7.5" width="9" height="1.2" fill="#6e6e6e"/><rect x="659.2" y="5" width="1.2" height="9" fill="#6e6e6e"/><rect x="656.75" y="10.0" width="9" height="1.2" fill="#6e6e6e"/><rect x="661.8" y="5" width="1.2" height="9" fill="#6e6e6e"/><rect x="656.75" y="12.5" width="9" height="1.2" fill="#6e6e6e"/><rect x="664.2" y="5" width="1.2" height="9" fill="#6e6e6e"/><rect x="705.5" y="0" width="16.5" height="19" fill="#c8c8c8"/><rect x="709.5" y="5.0" width="9" height="1.2" fill="#6e6e6e"/><rect x="709.5" y="5" width="1.2" height="9" fill="#6e6e6e"/><rect x="709.5" y="7.5" width="9" height="1.2" fill="#6e6e6e"/><rect x="712.0" y="5" width="1.2" height="9" fill="#6e6e6e"/><rect x="709.5" y="10.0" width="9" height="1.2" fill="#6e6e6e"/><rect x="714.5" y="5" width="1.2" height="9" fill="#6e6e6e"/><rect x="709.5" y="12.5" width="9" height="1.2" fill="#6e6e6e"/><rect x="717.0" y="5" width="1.2" height="9" fill="#6e6e6e"/><rect x="108.5" y="5.0" width="9" height="1.2" fill="#6e6e6e"/><rect x="108.5" y="5" width="1.2" height="9" fill="#6e6e6e"/><rect x="108.5" y="7.5" width="9" height="1.2" fill="#6e6e6e"/><rect x="111.0" y="5" width="1.2" height="9" fill="#6e6e6e"/><rect x="108.5" y="10.0" width="9" height="1.2" fill="#6e6e6e"/><rect x="113.5" y="5" width="1.2" height="9" fill="#6e6e6e"/><rect x="108.5" y="12.5" width="9" height="1.2" fill="#6e6e6e"/><rect x="116.0" y="5" width="1.2" height="9" fill="#6e6e6e"/><rect x="1122" y="5.0" width="9" height="1.2" fill="#6e6e6e"/><rect x="1122.0" y="5" width="1.2" height="9" fill="#6e6e6e"/><rect x="1122" y="7.5" width="9" height="1.2" fill="#6e6e6e"/><rect x="1124.5" y="5" width="1.2" height="9" fill="#6e6e6e"/><rect x="1122" y="10.0" width="9" height="1.2" fill="#6e6e6e"/><rect x="1127.0" y="5" width="1.2" height="9" fill="#6e6e6e"/><rect x="1122" y="12.5" width="9" height="1.2" fill="#6e6e6e"/><rect x="1129.5" y="5" width="1.2" height="9" fill="#6e6e6e"/></svg></div>
<svg class="a" style="left:838px;top:179px" width="14" height="11"><path d="M1.5 1.5 H12.5 L7 9 Z" fill="#fff" stroke="#777" stroke-width="1"/></svg>
<svg class="a" style="left:807px;top:192px" width="14" height="17"><path d="M1.5 7.5 L7 1.5 L12.5 7.5 V10.5 H1.5 Z" fill="#fff" stroke="#777" stroke-width="1"/><rect x="1.5" y="10.5" width="11" height="5" fill="#fff" stroke="#777" stroke-width="1"/></svg>
<svg class="a" style="left:1204px;top:193px" width="14" height="11"><path d="M1.5 9.5 L7 1.5 L12.5 9.5 Z" fill="#fff" stroke="#777" stroke-width="1"/></svg>
<div class="a" style="left:5px;top:180px;width:18px;height:23px;background:#fff;border:1px solid #dadada"></div>
<svg class="a" style="left:9px;top:188px" width="10" height="9"><path d="M2 1 V7 H8" fill="none" stroke="#555" stroke-width="2"/></svg>
<div class="a" style="left:91.5px;top:207px;width:1256px;height:532px;background:#fff"></div>
<div class="a" style="left:225px;top:254px;width:1px;height:27px;background:#a8a8a8"></div>
<div class="a" style="left:199px;top:280px;width:27px;height:1px;background:#a8a8a8"></div>
<div class="a" style="left:1215px;top:254px;width:1px;height:27px;background:#a8a8a8"></div>
<div class="L" style="left:452px;top:287.7px;font-size:20.4px;-webkit-text-stroke:0.57px #111;color:#111;"><i>中</i><i>国</i><i>新</i><i>商</i><i>科</i><i>大</i><i>学</i><i>集</i><i>团</i></div><div class="a nw" style="left:643px;top:291px;font-size:20.5px;font-weight:bold;color:#111;font-family:'Liberation Serif',serif;line-height:24px">2021-2022</div><div class="L" style="left:739.5px;top:287.3px;font-size:20.95px;-webkit-text-stroke:0.59px #111;color:#111;"><i>学</i><i>年</i><i>新</i><i>商</i><i>科</i><i>教</i><i>育</i><i>推</i><i>进</i><i>对</i><i>照</i><i>表</i><svg width="16.8" height="20.9" viewBox="0 0 12 15" style="vertical-align:baseline"><path d="M10.5 5 V10.5 H2 M4.5 8 L2 10.5 L4.5 13" fill="none" stroke="#9a9a9a" stroke-width="1.1"/></svg></div><div class="L" style="left:236px;top:331.5px;font-size:17.3px;-webkit-text-stroke:0.48px #111;color:#111;"><i>时</i><i>间</i><i>节</i><i>点</i><i class="l">：</i></div><div class="a nw" style="left:324.5px;top:334.0px;font-size:17.5px;font-weight:bold;color:#111;font-family:'Liberation Serif',serif;line-height:21px">2021</div><div class="a nw" style="left:378px;top:334.0px;font-size:17.5px;font-weight:bold;color:#111;font-family:'Liberation Serif',serif;line-height:21px">2022</div><div class="a nw" style="left:543.5px;top:334.0px;font-size:17.5px;font-weight:bold;color:#111;font-family:'Liberation Serif',serif;line-height:21px">2021.9</div><div class="a nw" style="left:629px;top:334.0px;font-size:17.5px;font-weight:bold;color:#111;font-family:'Liberation Serif',serif;line-height:21px">2021.10</div><div class="a" style="left:361.5px;top:343.5px;width:14.0px;height:1.6px;background:#222"></div><div class="a" style="left:596px;top:343.5px;width:14.5px;height:1.6px;background:#222"></div><div class="a" style="left:612px;top:343.5px;width:14.700000000000045px;height:1.6px;background:#222"></div><div class="L" style="left:419.4px;top:331.5px;font-size:17.3px;-webkit-text-stroke:0.48px #111;color:#111;"><i>第</i><i>一</i><i>学</i><i>期</i><i>半</i><i>期</i><i class="po">（</i></div><div class="L" style="left:688px;top:331.5px;font-size:17.3px;-webkit-text-stroke:0.48px #111;color:#111;"><i class="pc">）</i></div><div class="a" style="left:709px;top:343px;width:153px;height:2px;background-image:radial-gradient(circle,#777 0.8px,transparent 1px);background-size:7.65px 2px"></div><div class="L" style="left:869.5px;top:331.1px;font-size:17.9px;-webkit-text-stroke:0.50px #111;color:#111;"><i>部</i><i>门</i><i class="l">：</i><i>秦</i><i>山</i><i>科</i><i>技</i><i>学</i><i>院</i><i>淬</i><i>炼</i><i>商</i><i>学</i><i>院</i><svg width="14.3" height="17.9" viewBox="0 0 12 15" style="vertical-align:baseline"><path d="M10.5 5 V10.5 H2 M4.5 8 L2 10.5 L4.5 13" fill="none" stroke="#9a9a9a" stroke-width="1.1"/></svg></div><div class="ln" style="left:204px;top:362px;width:1px;height:377px;background:#000"></div><div class="ln" style="left:276px;top:362px;width:1px;height:377px;background:#333"></div><div class="ln" style="left:413px;top:362px;width:1px;height:377px;background:#333"></div><div class="ln" style="left:752px;top:362px;width:1px;height:377px;background:#333"></div><div class="ln" style="left:805px;top:362px;width:1px;height:377px;background:#333"></div><div class="ln" style="left:1218px;top:362px;width:1px;height:377px;background:#555"></div><div class="ln" style="left:204px;top:362px;width:1015px;height:1px;background:#000"></div><div class="ln" style="left:204px;top:409px;width:1015px;height:1px;background:#000"></div><div class="ln" style="left:276px;top:597px;width:943px;height:1px;background:#222"></div><svg class="a" style="left:188px;top:345.5px" width="17" height="17"><rect x="0.5" y="0.5" width="15" height="15" fill="#fff" stroke="#999"/><path d="M8 2.5 V13.5 M2.5 8 H13.5" stroke="#333" stroke-width="1"/><path d="M6.3 4.3 L8 2.5 L9.7 4.3 Z M6.3 11.7 L8 13.5 L9.7 11.7 Z M4.3 6.3 L2.5 8 L4.3 9.7 Z M11.7 6.3 L13.5 8 L11.7 9.7Z" fill="#333"/></svg><div class="L" style="left:223px;top:373.0px;font-size:17.3px;-webkit-text-stroke:0.48px #111;color:#111;"><i>类</i><i>别</i><svg width="13.8" height="17.3" viewBox="0 0 12 15" style="vertical-align:baseline"><path d="M10.5 5 V10.5 H2 M4.5 8 L2 10.5 L4.5 13" fill="none" stroke="#9a9a9a" stroke-width="1.1"/></svg></div><div class="L" style="left:329px;top:373.0px;font-size:17.3px;-webkit-text-stroke:0.48px #111;color:#111;"><i>指</i><i>标</i><svg width="13.8" height="17.3" viewBox="0 0 12 15" style="vertical-align:baseline"><path d="M10.5 5 V10.5 H2 M4.5 8 L2 10.5 L4.5 13" fill="none" stroke="#9a9a9a" stroke-width="1.1"/></svg></div><div class="L" style="left:576px;top:373.0px;font-size:17.3px;-webkit-text-stroke:0.48px #111;color:#111;"><i>描</i><i>述</i><svg width="13.8" height="17.3" viewBox="0 0 12 15" style="vertical-align:baseline"><path d="M10.5 5 V10.5 H2 M4.5 8 L2 10.5 L4.5 13" fill="none" stroke="#9a9a9a" stroke-width="1.1"/></svg></div><div class="L" style="left:762.5px;top:361.4px;font-size:17.5px;-webkit-text-stroke:0.49px #111;color:#111;"><i>是</i><i>否</i></div><div class="L" style="left:762.5px;top:383.9px;font-size:17.5px;-webkit-text-stroke:0.49px #111;color:#111;"><i>推</i><i>进</i><svg width="14.0" height="17.5" viewBox="0 0 12 15" style="vertical-align:baseline"><path d="M10.5 5 V10.5 H2 M4.5 8 L2 10.5 L4.5 13" fill="none" stroke="#9a9a9a" stroke-width="1.1"/></svg></div><div class="L" style="left:977px;top:372.7px;font-size:17.7px;-webkit-text-stroke:0.50px #111;color:#111;"><i>成</i><i>果</i><i>记</i><i>录</i><svg width="14.2" height="17.7" viewBox="0 0 12 15" style="vertical-align:baseline"><path d="M10.5 5 V10.5 H2 M4.5 8 L2 10.5 L4.5 13" fill="none" stroke="#9a9a9a" stroke-width="1.1"/></svg></div><div class="a" style="left:1217px;top:364px"><svg width="12.4" height="15.5" viewBox="0 0 12 15" style="vertical-align:baseline"><path d="M10.5 5 V10.5 H2 M4.5 8 L2 10.5 L4.5 13" fill="none" stroke="#9a9a9a" stroke-width="1.1"/></svg></div><div class="a" style="left:1217px;top:412px"><svg width="12.4" height="15.5" viewBox="0 0 12 15" style="vertical-align:baseline"><path d="M10.5 5 V10.5 H2 M4.5 8 L2 10.5 L4.5 13" fill="none" stroke="#9a9a9a" stroke-width="1.1"/></svg></div><div class="a" style="left:1217px;top:600px"><svg width="12.4" height="15.5" viewBox="0 0 12 15" style="vertical-align:baseline"><path d="M10.5 5 V10.5 H2 M4.5 8 L2 10.5 L4.5 13" fill="none" stroke="#9a9a9a" stroke-width="1.1"/></svg></div><div class="L" style="left:423.5px;top:445.3px;font-size:15.56px;color:#262626;"><i>围</i><i>绕</i><i>人</i><i>才</i><i>培</i><i>养</i><i>目</i><i>标</i><i class="l">、</i><i>专</i><i>业</i><i>特</i><i>色</i><i>定</i><i>位</i><i class="l">、</i><i>课</i><i>程</i><i>特</i><i>色</i></div><div class="L" style="left:423.5px;top:468.6px;font-size:15.56px;color:#262626;"><i>定</i><i>位</i><i>和</i><i>个</i><i>人</i><i>发</i><i>展</i><i>定</i><i>位</i><i class="l">，</i><i>结</i><i>合</i><i>新</i><i>商</i><i>科</i><i>＝</i><i class="r">“</i><i>商</i><i>科</i><i style="width:.5em">+</i><i>信</i></div><div class="L" style="left:423.5px;top:491.9px;font-size:15.56px;color:#262626;"><i>息</i><i>产</i><i>业</i><i style="width:.5em">+</i><i>完</i><i>满</i><i>通</i><i>识</i><i style="width:.5em">+</i><i>实</i><i>战</i><i>项</i><i>目</i><i style="width:.5em">+</i><i>大</i><i>师</i><i>课</i><i class="l">”</i><i>深</i><i>度</i><i>融</i></div><div class="L" style="left:423.5px;top:515.2px;font-size:15.56px;color:#262626;"><i>合</i><i>优</i><i>化</i><i>课</i><i>程</i><i>教</i><i>学</i><i>大</i><i>纲</i><i class="l">，</i><i>建</i><i>设</i><i>和</i><i>申</i><i>请</i><i>精</i><i>品</i><i>课</i><i>程</i><i class="l">、</i></div><div class="L" style="left:423.5px;top:538.5px;font-size:15.56px;color:#262626;"><i>一</i><i>流</i><i>课</i><i>程</i><i>等</i><i class="l">；</i><i>各</i><i>级</i><i>组</i><i>织</i><i>教</i><i>师</i><i>课</i><i>程</i><i>思</i><i>政</i><i>建</i><i>设</i><i class="l">；</i><i style="width:.5em">·</i><svg width="12.4" height="15.6" viewBox="0 0 12 15" style="vertical-align:baseline"><path d="M10.5 5 V10.5 H2 M4.5 8 L2 10.5 L4.5 13" fill="none" stroke="#9a9a9a" stroke-width="1.1"/></svg></div><div class="a" style="left:610px;top:557px;width:93px;height:1px;background:#5b8fd0"></div><div class="a" style="left:610px;top:559px;width:93px;height:1px;background:#a9c4e6"></div><svg class="a" style="left:640px;top:514px" width="12" height="20"><path d="M1 1.5 H4.5 Q6 1.5 6 3 Q6 1.5 7.5 1.5 H11 M6 3 V17 Q6 18.5 4.5 18.5 H1 M6 17 Q6 18.5 7.5 18.5 H11" fill="none" stroke="#111" stroke-width="1.5"/></svg><div class="L" style="left:295px;top:480.0px;font-size:15.56px;color:#262626;"><i class="r">“</i><i>新</i><i>商</i><i>科</i><i class="l">”</i><i>课</i><i>程</i></div><div class="L" style="left:330px;top:504.1px;font-size:15.56px;color:#262626;"><i>建</i><i>设</i><svg width="12.4" height="15.6" viewBox="0 0 12 15" style="vertical-align:baseline"><path d="M10.5 5 V10.5 H2 M4.5 8 L2 10.5 L4.5 13" fill="none" stroke="#9a9a9a" stroke-width="1.1"/></svg></div><div class="L" style="left:772.5px;top:492.3px;font-size:15.56px;color:#262626;"><i>是</i><svg width="12.4" height="15.6" viewBox="0 0 12 15" style="vertical-align:baseline"><path d="M10.5 5 V10.5 H2 M4.5 8 L2 10.5 L4.5 13" fill="none" stroke="#9a9a9a" stroke-width="1.1"/></svg></div><div class="L" style="left:815.5px;top:410.8px;font-size:15.56px;color:#262626;"><i>　</i><i>　</i><i>首</i><i>先</i><i>对</i><i>市</i><i>场</i><i>营</i><i>销</i><i>专</i><i>业</i><i>的</i><i>人</i><i>才</i><i>培</i><i>养</i><i>方</i><i>案</i><i>进</i><i>行</i><i>了</i><i>修</i><i>订</i><i class="l">，</i><i>借</i></div><div class="L" style="left:815.5px;top:434.1px;font-size:15.56px;color:#262626;"><i>鉴</i><i>移</i><i>动</i><i>学</i><i>院</i><i>优</i><i>秀</i><i>经</i><i>验</i><i class="l">，</i><i>对</i><i>每</i><i>门</i><i>课</i><i>程</i><i>的</i><i>教</i><i>学</i><i>大</i><i>纲</i><i>再</i><i>次</i><i>修</i><i>订</i><i class="l">，</i></div><div class="L" style="left:815.5px;top:457.4px;font-size:15.56px;color:#262626;"><i>开</i><i>始</i><i>模</i><i>块</i><i>化</i><i>处</i><i>理</i><i class="l">，</i><i>以</i><i>期</i><i>符</i><i>合</i><i>学</i><i>校</i><i>发</i><i>展</i><i>定</i><i>位</i><i class="l">，</i><i>在</i><i>各</i><i>专</i><i>业</i><i>体</i><i>现</i></div><div class="L" style="left:815.5px;top:480.7px;font-size:15.56px;color:#262626;"><i>出</i><i>新</i><i>商</i><i>科</i><i>的</i><i>特</i><i>色</i><i class="l">。</i><svg width="12.4" height="15.6" viewBox="0 0 12 15" style="vertical-align:baseline"><path d="M10.5 5 V10.5 H2 M4.5 8 L2 10.5 L4.5 13" fill="none" stroke="#9a9a9a" stroke-width="1.1"/></svg></div><div class="L" style="left:815.5px;top:504.0px;font-size:15.56px;color:#262626;"><i>　</i><i>　</i><i>定</i><i>期</i><i>进</i><i>行</i><i>教</i><i>师</i><i>课</i><i>程</i><i>思</i><i>政</i><i>建</i><i>设</i><i>以</i><i>及</i><i>师</i><i>德</i><i>师</i><i>风</i><i>建</i><i>设</i><i>培</i><i>训</i><i class="l">。</i><svg width="12.4" height="15.6" viewBox="0 0 12 15" style="vertical-align:baseline"><path d="M10.5 5 V10.5 H2 M4.5 8 L2 10.5 L4.5 13" fill="none" stroke="#9a9a9a" stroke-width="1.1"/></svg></div><div class="a" style="left:940px;top:525px;width:94px;height:1px;background:#3a6fb5"></div><div class="L" style="left:815.5px;top:527.3px;font-size:15.56px;color:#888;"><i style="width:.5em">·</i><i style="width:.5em">·</i><i style="width:.5em">·</i><i style="width:.5em">·</i></div><div class="L" style="left:846.6px;top:527.3px;font-size:15.56px;color:#e2232a;-webkit-text-stroke:0.35px #e2232a;"><i>下</i><i>一</i><i>步</i><i>工</i><i>作</i><i class="l">：</i><i>拟</i><i>将</i><i>移</i><i>动</i><i>商</i><i>务</i><i>时</i><i>代</i><i>的</i><i>品</i><i>牌</i><i>与</i><i>营</i><i>销</i><i>管</i><i>理</i><i>这</i></div><div class="L" style="left:815.5px;top:550.6px;font-size:15.56px;color:#e2232a;-webkit-text-stroke:0.35px #e2232a;"><i>门</i><i>课</i><i>建</i><i>设</i><i>成</i><i>精</i><i>品</i><i>课</i><i>程</i><i class="l">，</i><i>培</i><i>养</i><i>优</i><i>秀</i><i>教</i><i>学</i><i>名</i><i>师</i><i class="l">。</i><i>探</i><i>索</i><i>课</i><i>程</i><i>改</i></div><div class="L" style="left:815.5px;top:573.9px;font-size:15.56px;color:#e2232a;-webkit-text-stroke:0.35px #e2232a;"><i>革</i><i class="l">，</i><i>反</i><i>转</i><i>课</i><i>堂</i><i>等</i><svg width="12.4" height="15.6" viewBox="0 0 12 15" style="vertical-align:baseline"><path d="M10.5 5 V10.5 H2 M4.5 8 L2 10.5 L4.5 13" fill="none" stroke="#9a9a9a" stroke-width="1.1"/></svg></div><div class="L" style="left:423.5px;top:656.0px;font-size:15.56px;color:#262626;"><i>围</i><i>绕</i><i>人</i><i>才</i><i>培</i><i>养</i><i>目</i><i>标</i><i class="l">、</i><i>专</i><i>业</i><i>特</i><i>色</i><i>定</i><i>位</i><i>和</i><i>课</i><i>程</i><i>特</i><i>色</i></div><div class="L" style="left:423.5px;top:679.3px;font-size:15.56px;color:#262626;"><i>定</i><i>位</i><i>和</i><i>个</i><i>人</i><i>发</i><i>展</i><i>定</i><i>位</i><i class="l">，</i><i>结</i><i>合</i><i>新</i><i>商</i><i>科</i><i>＝</i><i class="r">“</i><i>商</i><i>科</i><i style="width:.5em">+</i><i>信</i></div><div class="L" style="left:423.5px;top:702.6px;font-size:15.56px;color:#262626;"><i>息</i><i>产</i><i>业</i><i style="width:.5em">+</i><i>完</i><i>满</i><i>通</i><i>识</i><i style="width:.5em">+</i><i>实</i><i>战</i><i>项</i><i>目</i><i style="width:.5em">+</i><i>大</i><i>师</i><i>课</i><i class="l">”</i><i>深</i><i>度</i><i>融</i></div><div class="L" style="left:423.5px;top:725.9px;font-size:15.56px;color:#262626;"><i>合</i><i>申</i><i>请</i><i>教</i><i>改</i><i>科</i><i>研</i><i>项</i><i>目</i><i>等</i><i class="l">，</i><i>教</i><i>师</i><i>论</i><i>文</i><i>发</i><i>表</i><i class="l">；</i><svg width="12.4" height="15.6" viewBox="0 0 12 15" style="vertical-align:baseline"><path d="M10.5 5 V10.5 H2 M4.5 8 L2 10.5 L4.5 13" fill="none" stroke="#9a9a9a" stroke-width="1.1"/></svg></div><div class="L" style="left:295px;top:679.3px;font-size:15.56px;color:#262626;"><i class="r">“</i><i>新</i><i>商</i><i>科</i><i class="l">”</i><i>教</i><i>改</i></div><div class="L" style="left:314px;top:703.3px;font-size:15.56px;color:#262626;"><i>科</i><i>研</i><i>项</i><i>目</i><svg width="12.4" height="15.6" viewBox="0 0 12 15" style="vertical-align:baseline"><path d="M10.5 5 V10.5 H2 M4.5 8 L2 10.5 L4.5 13" fill="none" stroke="#9a9a9a" stroke-width="1.1"/></svg></div><div class="L" style="left:772.5px;top:690.3px;font-size:15.56px;color:#262626;"><i>是</i><svg width="12.4" height="15.6" viewBox="0 0 12 15" style="vertical-align:baseline"><path d="M10.5 5 V10.5 H2 M4.5 8 L2 10.5 L4.5 13" fill="none" stroke="#9a9a9a" stroke-width="1.1"/></svg></div><div class="L" style="left:815.5px;top:597.8px;font-size:15.56px;color:#262626;"><i>　</i><i>　</i><i>积</i><i>极</i><i>申</i><i>报</i><i>教</i><i>改</i><i>科</i><i>研</i><i>项</i><i>目</i><i class="l">，</i><i>本</i><i>学</i><i>期</i><i>成</i><i>功</i><i>申</i><i>报</i><i>山</i><i>东</i><i>省</i><i>传</i><i>统</i></div><div class="L" style="left:815.5px;top:621.1px;font-size:15.56px;color:#262626;"><i>文</i><i>化</i><i>与</i><i>经</i><i>济</i><i>社</i><i>会</i><i>发</i><i>展</i><i>专</i><i>项</i><i>课</i><i>题</i><i class="po">（</i><i>浩</i><i>燕</i><i class="pc">）</i><i class="l">，</i><i>同</i><i>时</i><i>参</i><i>与</i><i>申</i><i>报</i><i>山</i></div><div class="L" style="left:815.5px;top:644.4px;font-size:15.56px;color:#262626;"><i>东</i><i>省</i><i>教</i><i>育</i><i>科</i><i>学</i><i>规</i><i>划</i><i>课</i><i>题</i><i class="po">（</i><i>曹</i><i>冰</i><i>玉</i><i class="pc">）</i><i class="l">。</i><svg width="12.4" height="15.6" viewBox="0 0 12 15" style="vertical-align:baseline"><path d="M10.5 5 V10.5 H2 M4.5 8 L2 10.5 L4.5 13" fill="none" stroke="#9a9a9a" stroke-width="1.1"/></svg></div><div class="L" style="left:815.5px;top:667.7px;font-size:15.56px;color:#262626;"><i>　</i><i>　</i><i>发</i><i>表</i><i>论</i><i>文</i><i class="l">：</i><i>基</i><i>于</i><i>新</i><i>经</i><i>济</i><i>背</i><i>景</i><i>下</i><i>企</i><i>业</i><i>市</i><i>场</i><i>营</i><i>销</i><i>战</i><i>略</i><i>新</i><i>思</i></div><div class="L" style="left:815.5px;top:691.0px;font-size:15.56px;color:#262626;"><i>维</i><i>的</i><i>探</i><i>讨</i><i class="po">（</i><i>浩</i><i>燕</i><i class="pc">）</i><i class="l">；</i><i>探</i><i>究</i><i>互</i><i>联</i><i>网</i><i>背</i><i>景</i><i>下</i><i>企</i><i>业</i><i>市</i><i>场</i><i>营</i><i>销</i><i>长</i><i>信</i></div><div class="L" style="left:815.5px;top:714.3px;font-size:15.56px;color:#262626;"><i class="po">（</i><i>王</i><i>素</i><i>丽</i><i class="pc">）</i><svg width="12.4" height="15.6" viewBox="0 0 12 15" style="vertical-align:baseline"><path d="M10.5 5 V10.5 H2 M4.5 8 L2 10.5 L4.5 13" fill="none" stroke="#9a9a9a" stroke-width="1.1"/></svg></div><svg class="a" style="left:1034px;top:638px" width="17" height="4"><path d="M0 2 Q2 0 4 2 T8 2 T12 2 T16 2" fill="none" stroke="#e23" stroke-width="0.9"/></svg><svg class="a" style="left:893px;top:709px" width="17" height="4"><path d="M0 2 Q2 0 4 2 T8 2 T12 2 T16 2" fill="none" stroke="#e23" stroke-width="0.9"/></svg><div class="L" style="left:217.6px;top:609.3px;font-size:15.56px;color:#262626;"><i>新</i><i>商</i><i>科</i></div><div class="L" style="left:217.6px;top:632.3px;font-size:15.56px;color:#262626;"><i>之</i></div><div class="L" style="left:233.2px;top:632.3px;font-size:15.56px;-webkit-text-stroke:0.44px #111;color:#111;"><i class="r">“</i><i>商</i></div><div class="L" style="left:221px;top:655.3px;font-size:15.56px;-webkit-text-stroke:0.44px #111;color:#111;"><i>科</i><i style="width:.5em">+</i><i class="l">”</i></div><div class="L" style="left:217.6px;top:679.3px;font-size:15.56px;-webkit-text-stroke:0.44px #111;color:#111;"><i>教</i><i>学</i><i>成</i></div><div class="L" style="left:217.6px;top:703.3px;font-size:15.56px;-webkit-text-stroke:0.44px #111;color:#111;"><i>果</i><i>推</i><i>进</i><svg width="12.4" height="15.6" viewBox="0 0 12 15" style="vertical-align:baseline"><path d="M10.5 5 V10.5 H2 M4.5 8 L2 10.5 L4.5 13" fill="none" stroke="#9a9a9a" stroke-width="1.1"/></svg></div>
<div class="a" style="left:0;top:738.5px;width:1428px;height:7px;background:#f0f0f0;border-top:1px solid #d4d4d4"></div>
<div class="a" style="left:1138px;top:741px;width:44px;height:4px;background:#c8c8c8"></div>
<div class="a" style="left:1194px;top:262.5px;width:234px;height:35px;background:#efefef"></div>
<div class="a" style="left:1202px;top:270px;width:1px;height:18px;background:#999"></div><div class="a" style="left:1205px;top:270px;width:1px;height:18px;background:#999"></div>
<div class="a nw" style="left:1218px;top:267px;font-size:24px;color:#111;line-height:28px;-webkit-text-stroke:0.5px #111">中</div>
<svg class="a" style="left:1254px;top:268px" width="24" height="24"><path d="M8 2 C16 2.5 21 9 19.5 15.5 C18 21 11 23.5 3.5 20.5 C10 19.5 14.5 15 14 9.5 C13.5 6 11.5 3.5 8 2 Z" fill="none" stroke="#111" stroke-width="1.8" stroke-linejoin="round"/></svg>
<svg class="a" style="left:1291px;top:268px" width="22" height="24"><circle cx="5" cy="7" r="3" fill="none" stroke="#111" stroke-width="1.4"/><path d="M14 12 C17 11 18 14 16.5 17 C15.5 19 13.5 20.5 12.5 21 L12 20 C13.5 19 14.5 18 14.5 16.5 C12.5 16.5 12 12.5 14 12Z" fill="#111"/></svg>
<div class="a nw" style="left:1326px;top:267px;font-size:24px;color:#111;line-height:28px;-webkit-text-stroke:0.5px #111">简</div>
<svg class="a" style="left:1361px;top:268px" width="25" height="25"><circle cx="12.5" cy="12.5" r="11" fill="none" stroke="#111" stroke-width="1.5"/><circle cx="8.5" cy="9.5" r="1.3" fill="#111"/><circle cx="16.5" cy="9.5" r="1.3" fill="#111"/><path d="M7 14.5 C9 18.5 16 18.5 18 14.5" fill="none" stroke="#111" stroke-width="1.5"/></svg>
<svg class="a" style="left:1397px;top:268px" width="24" height="24"><path d="M19.26 9.75 L22.64 10.17 L22.64 13.83 L19.26 14.25 L18.72 15.55 L20.82 18.23 L18.23 20.82 L15.55 18.72 L14.25 19.26 L13.83 22.64 L10.17 22.64 L9.75 19.26 L8.45 18.72 L5.77 20.82 L3.18 18.23 L5.28 15.55 L4.74 14.25 L1.36 13.83 L1.36 10.17 L4.74 9.75 L5.28 8.45 L3.18 5.77 L5.77 3.18 L8.45 5.28 L9.75 4.74 L10.17 1.36 L13.83 1.36 L14.25 4.74 L15.55 5.28 L18.23 3.18 L20.82 5.77 L18.72 8.45 Z" fill="none" stroke="#111" stroke-width="1.4" stroke-linejoin="round"/><circle cx="12" cy="12" r="3.4" fill="none" stroke="#111" stroke-width="1.4"/></svg>
<div class="a" style="left:1408px;top:354px;width:24px;height:60px;background:#6b6b6b;border-radius:5px"></div>
<svg class="a" style="left:1413px;top:375px" width="10" height="18"><path d="M8 1 L2 9 L8 17" fill="none" stroke="#d8d8d8" stroke-width="1.6"/></svg>
<div class="a" style="left:16px;top:608px;width:212px;height:44px;background:rgba(0,0,0,0.47);border-radius:3px"></div>
<svg class="a" style="left:29px;top:617px" width="26" height="26"><circle cx="13" cy="13" r="12" fill="#c9c9c9"/><circle cx="9" cy="10" r="1.8" fill="#7a7a7a"/><circle cx="17" cy="10" r="1.8" fill="#7a7a7a"/><path d="M6.5 14 H19.5 C19 19 16 21 13 21 C10 21 7 19 6.5 14Z" fill="#7a7a7a"/></svg>
<div class="a" style="left:63.5px;top:615px;width:1.5px;height:29px;background:#bdbdbd"></div>
<div class="a nw" style="left:85px;top:619px;font-size:18px;color:#cfcfcf;line-height:22px">说点什么...</div>
<div class="a" style="left:184px;top:615px;width:1.5px;height:29px;background:#bdbdbd"></div>
<svg class="a" style="left:198px;top:622px" width="9" height="15"><path d="M7.5 1 L1.5 7.5 L7.5 14" fill="none" stroke="#cfcfcf" stroke-width="1.4"/></svg>
</body></html>
